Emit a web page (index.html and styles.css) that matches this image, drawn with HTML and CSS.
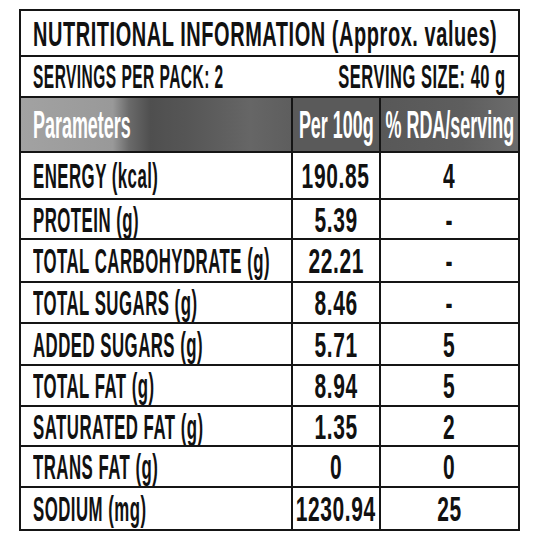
FILE: index.html
```html
<!DOCTYPE html>
<html lang="en">
<head>
    <meta charset="UTF-8">
    <meta name="viewport" content="width=device-width, initial-scale=1.0">
    <title>Nutritional Information</title>
    <link rel="stylesheet" href="styles.css">
</head>
<body>

<div class="panel">
    <!-- title -->
    <div class="title-row"><span class="txt t-title">NUTRITIONAL INFORMATION (Approx. values)</span></div>

    <!-- servings -->
    <div class="serving-row">
        <div class="serving-left"><span class="txt t-serv">SERVINGS PER PACK: 2</span></div>
        <div class="serving-right"><span class="txt t-serv">SERVING SIZE: 40 g</span></div>
    </div>

    <!-- header -->
    <div class="head head-param"><span class="txt t-head">Parameters</span></div>
    <div class="head head-per"><span class="txt t-head">Per 100g</span></div>
    <div class="head head-rda"><span class="txt t-head">% RDA/serving</span></div>

    <!-- rows -->
    <div class="cell label"><span class="txt t-label">ENERGY (kcal)</span></div>
    <div class="cell num"><span class="txt t-num">190.85</span></div>
    <div class="cell num"><span class="txt t-num">4</span></div>

    <div class="cell label"><span class="txt t-label">PROTEIN (g)</span></div>
    <div class="cell num"><span class="txt t-num">5.39</span></div>
    <div class="cell num"><span class="txt t-num">-</span></div>

    <div class="cell label"><span class="txt t-label">TOTAL CARBOHYDRATE (g)</span></div>
    <div class="cell num"><span class="txt t-num">22.21</span></div>
    <div class="cell num"><span class="txt t-num">-</span></div>

    <div class="cell label"><span class="txt t-label">TOTAL SUGARS (g)</span></div>
    <div class="cell num"><span class="txt t-num">8.46</span></div>
    <div class="cell num"><span class="txt t-num">-</span></div>

    <div class="cell label"><span class="txt t-label">ADDED SUGARS (g)</span></div>
    <div class="cell num"><span class="txt t-num">5.71</span></div>
    <div class="cell num"><span class="txt t-num">5</span></div>

    <div class="cell label"><span class="txt t-label">TOTAL FAT (g)</span></div>
    <div class="cell num"><span class="txt t-num">8.94</span></div>
    <div class="cell num"><span class="txt t-num">5</span></div>

    <div class="cell label"><span class="txt t-label">SATURATED FAT (g)</span></div>
    <div class="cell num"><span class="txt t-num">1.35</span></div>
    <div class="cell num"><span class="txt t-num">2</span></div>

    <div class="cell label"><span class="txt t-label">TRANS FAT (g)</span></div>
    <div class="cell num"><span class="txt t-num">0</span></div>
    <div class="cell num"><span class="txt t-num">0</span></div>

    <div class="cell label"><span class="txt t-label">SODIUM (mg)</span></div>
    <div class="cell num"><span class="txt t-num">1230.94</span></div>
    <div class="cell num"><span class="txt t-num">25</span></div>
</div>

</body>
</html>
```

FILE: styles.css
```css
/* base */
body {
    margin: 0;
    background: #fff;
    font-family: "Liberation Sans", Arial, sans-serif;
    font-weight: bold;
    color: #111;
}

/* the whole label is one grid, the black gaps are the rules */
.panel {
    display: grid;
    grid-template-columns: 270px 86px 137px;
    grid-template-rows: 44px 39px 53px 45px 38px 41px 39px 40px 39px 38px 39px 41px;
    gap: 2px;
    padding: 2px;
    background: #151515;
    width: max-content;
    margin: 9px 0 0 19px;
}
.panel > div {
    background: #fff;
    display: flex;
    align-items: center;
    min-width: 0;
}

/* condensed text */
.txt {
    display: inline-block;
    white-space: nowrap;
    line-height: 1;
    flex-shrink: 0;
    letter-spacing: 1px;
}

/* title + servings */
.title-row, .serving-row {
    grid-column: 1 / -1;
    padding: 0 12px;
}
.t-title {
    font-size: 35px;
    transform: scaleX(.57);
    transform-origin: left center;
}
.serving-row > div {
    flex: 1;
    min-width: 0;
    display: flex;
}
.serving-right {
    justify-content: flex-end;
}
.t-serv {
    font-size: 33px;
    transform: scaleX(.47);
}
.serving-left .t-serv {
    transform-origin: left center;
}
.serving-right .t-serv {
    transform: scaleX(.5);
    transform-origin: right center;
}

/* header row */
.panel > .head {
    color: #fff;
}
.panel > .head-param {
    padding-left: 12px;
    background: linear-gradient(90deg, #a2a2a2 0%, #999 34%, #6a6a6a 40%, #4f4f4f 48%, #565656 62%, #666 85%, #5e5e5e 100%);
}
.panel > .head-per {
    justify-content: center;
    background: #5a5a5a;
}
.panel > .head-rda {
    justify-content: center;
    background: linear-gradient(90deg, #585858 0%, #5e5e5e 60%, #6c6c6c 100%);
}
.t-head {
    font-size: 39px;
    letter-spacing: 0;
    transform: scaleX(.46);
    transform-origin: left center;
}
.head-per .t-head, .head-rda .t-head {
    transform-origin: center;
}

/* data cells */
.cell.label {
    padding-left: 12px;
}
.cell.num {
    justify-content: center;
}
.t-label {
    font-size: 35px;
    transform: scaleX(.48);
    transform-origin: left center;
}
.t-num {
    font-size: 35px;
    transform: scaleX(.6);
}
```
